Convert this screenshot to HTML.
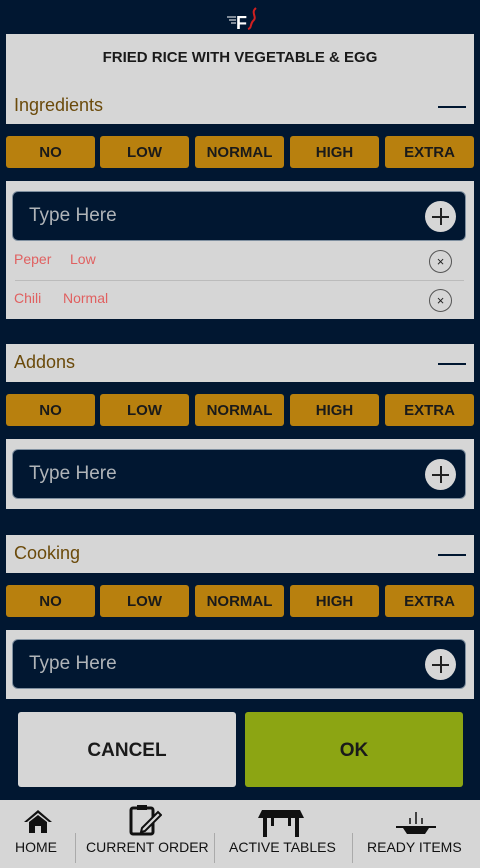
<!DOCTYPE html>
<html><head><meta charset="utf-8"><style>
*{margin:0;padding:0;box-sizing:border-box}
body{width:480px;height:868px;background:#011731;font-family:"Liberation Sans",sans-serif;position:relative;overflow:hidden}
.a{position:absolute}
.g{background:#d6d6d6}
.title{left:6px;top:34px;width:468px;height:90px}
.title .t{position:absolute;top:15px;width:100%;text-align:center;font-weight:bold;font-size:15px;color:#1a1a1a}
.hdr{font-size:18px;color:#6b4a0a}
.dash{position:absolute;right:8px;width:28px;height:2px;background:#011731}
.btn{position:absolute;height:32px;width:89px;background:#b8800e;border-radius:3px;font-weight:bold;font-size:15px;color:#1a1a1a;text-align:center;line-height:34px}
.inp{position:absolute;left:6px;width:454px;height:50px;background:#011731;border-radius:6px;border:1px solid #8090a0}
.inp span{position:absolute;left:16px;top:13px;font-size:19px;color:#b0b4b8}
.plus{position:absolute;right:9px;top:9px;width:31px;height:31px;border-radius:50%;background:#d6d6d6}
.plus:before{content:"";position:absolute;left:7px;top:15px;width:17px;height:1.5px;background:#222}
.plus:after{content:"";position:absolute;left:15px;top:7px;width:1.5px;height:17px;background:#222}
.x{position:absolute;width:23px;height:23px;border-radius:50%;border:1px solid #555;text-align:center;line-height:21px;font-size:13px;color:#222}
.red{position:absolute;font-size:14px;color:#e06060}
.nav{left:0;top:800px;width:480px;height:68px}
.nav .l{position:absolute;top:39px;font-size:14px;color:#111}
.sep{position:absolute;top:33px;width:1px;height:30px;background:#aaa}
</style></head><body>
<div class="a" style="left:226px;top:5px;width:40px;height:26px">
<svg width="40" height="26"><g stroke="#fff" stroke-width="1"><line x1="1" y1="12" x2="10" y2="12"/><line x1="3" y1="15" x2="10" y2="15"/><line x1="5" y1="18" x2="10" y2="18"/></g><text x="10" y="24" font-family="Liberation Sans" font-weight="bold" font-size="18" fill="#fff">F</text><path d="M30 3 C24 8 32 12 27 16 C24 19 26 23 22 24" stroke="#d02020" stroke-width="2" fill="none"/></svg></div>

<div class="a g title"><div class="t">FRIED RICE WITH VEGETABLE &amp; EGG</div>
<div class="a hdr" style="left:8px;top:61px">Ingredients</div><div class="dash" style="top:72px"></div></div>
<div class="btn" style="left:6px;top:136px">NO</div><div class="btn" style="left:100px;top:136px">LOW</div><div class="btn" style="left:195px;top:136px">NORMAL</div><div class="btn" style="left:290px;top:136px">HIGH</div><div class="btn" style="left:385px;top:136px">EXTRA</div>
<div class="a g" style="left:6px;top:181px;width:468px;height:138px">
<div class="inp" style="top:10px"><span>Type Here</span><div class="plus"></div></div>
<div class="red" style="left:8px;top:70px">Peper</div><div class="red" style="left:64px;top:70px">Low</div><div class="x" style="left:423px;top:69px">×</div>
<div class="a" style="left:9px;top:99px;width:449px;height:1px;background:#bbb"></div>
<div class="red" style="left:8px;top:109px">Chili</div><div class="red" style="left:57px;top:109px">Normal</div><div class="x" style="left:423px;top:108px">×</div>
</div>

<div class="a g" style="left:6px;top:344px;width:468px;height:38px"><div class="a hdr" style="left:8px;top:8px">Addons</div><div class="dash" style="top:19px"></div></div>
<div class="btn" style="left:6px;top:394px">NO</div><div class="btn" style="left:100px;top:394px">LOW</div><div class="btn" style="left:195px;top:394px">NORMAL</div><div class="btn" style="left:290px;top:394px">HIGH</div><div class="btn" style="left:385px;top:394px">EXTRA</div>
<div class="a g" style="left:6px;top:439px;width:468px;height:70px"><div class="inp" style="top:10px"><span>Type Here</span><div class="plus"></div></div></div>

<div class="a g" style="left:6px;top:535px;width:468px;height:38px"><div class="a hdr" style="left:8px;top:8px">Cooking</div><div class="dash" style="top:19px"></div></div>
<div class="btn" style="left:6px;top:585px">NO</div><div class="btn" style="left:100px;top:585px">LOW</div><div class="btn" style="left:195px;top:585px">NORMAL</div><div class="btn" style="left:290px;top:585px">HIGH</div><div class="btn" style="left:385px;top:585px">EXTRA</div>
<div class="a g" style="left:6px;top:630px;width:468px;height:69px"><div class="inp" style="top:9px"><span>Type Here</span><div class="plus"></div></div></div>

<div class="a" style="left:18px;top:712px;width:218px;height:75px;background:#d6d6d6;border-radius:3px;text-align:center;line-height:77px;font-size:19px;font-weight:bold;color:#1a1a1a">CANCEL</div>
<div class="a" style="left:245px;top:712px;width:218px;height:75px;background:#8ca513;border-radius:3px;text-align:center;line-height:77px;font-size:19px;font-weight:bold;color:#1a1a1a">OK</div>

<div class="a g nav">
<svg class="a" style="left:22px;top:8px" width="32" height="26"><path d="M16 2 L2 14 L5 14 L16 5 L27 14 L30 14 Z" fill="#111"/><path d="M7 14 L16 7 L25 14 L25 25 L19 25 L19 18 L13 18 L13 25 L7 25 Z" fill="#111"/></svg>
<div class="l" style="left:15px">HOME</div><div class="sep" style="left:75px"></div>
<svg class="a" style="left:128px;top:4px" width="34" height="32"><rect x="3" y="4" width="22" height="26" rx="2" fill="none" stroke="#111" stroke-width="3"/><rect x="9" y="1" width="10" height="5" fill="#111"/><path d="M14 24 L30 8 L33 11 L17 27 L13 28 Z" fill="#d6d6d6" stroke="#111" stroke-width="2"/></svg>
<div class="l" style="left:86px">CURRENT ORDER</div><div class="sep" style="left:214px"></div>
<svg class="a" style="left:258px;top:8px" width="48" height="30"><path d="M4 2 L42 2 L46 10 L0 10 Z" fill="#111"/><rect x="5" y="9" width="4" height="20" fill="#111"/><rect x="37" y="9" width="4" height="20" fill="#111"/><rect x="13" y="9" width="3" height="9" fill="#111"/><rect x="30" y="9" width="3" height="9" fill="#111"/></svg>
<div class="l" style="left:229px">ACTIVE TABLES</div><div class="sep" style="left:352px"></div>
<svg class="a" style="left:395px;top:10px" width="44" height="26"><g stroke="#111" stroke-width="1.5"><line x1="15" y1="8" x2="15" y2="14"/><line x1="21" y1="2" x2="21" y2="14"/><line x1="27" y1="8" x2="27" y2="14"/></g><rect x="1" y="16" width="40" height="2" fill="#111"/><path d="M8 18 L34 18 L30 24 L12 24 Z" fill="#111"/></svg>
<div class="l" style="left:367px">READY ITEMS</div>
</div>
</body></html>
